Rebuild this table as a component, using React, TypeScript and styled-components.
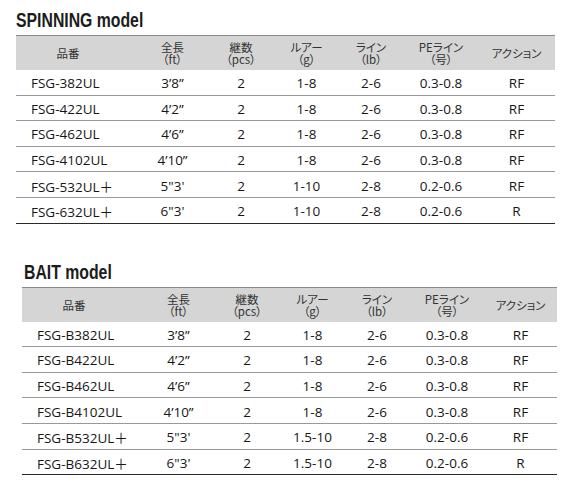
import styled, { createGlobalStyle } from 'styled-components';

const GlobalStyle = createGlobalStyle`
  html, body {
    margin: 0;
    padding: 0;
    background: #fff;
  }
`;

type Spec = {
  model: string;
  length: string;
  pcs: string;
  lure: string;
  line: string;
  pe: string;
  action: string;
};

const spinning: Spec[] = [
  { model: 'FSG-382UL', length: '3’8”', pcs: '2', lure: '1-8', line: '2-6', pe: '0.3-0.8', action: 'RF' },
  { model: 'FSG-422UL', length: '4’2”', pcs: '2', lure: '1-8', line: '2-6', pe: '0.3-0.8', action: 'RF' },
  { model: 'FSG-462UL', length: '4’6”', pcs: '2', lure: '1-8', line: '2-6', pe: '0.3-0.8', action: 'RF' },
  { model: 'FSG-4102UL', length: '4’10”', pcs: '2', lure: '1-8', line: '2-6', pe: '0.3-0.8', action: 'RF' },
  { model: 'FSG-532UL＋', length: '5"3\'', pcs: '2', lure: '1-10', line: '2-8', pe: '0.2-0.6', action: 'RF' },
  { model: 'FSG-632UL＋', length: '6"3\'', pcs: '2', lure: '1-10', line: '2-8', pe: '0.2-0.6', action: 'R' },
];

const bait: Spec[] = [
  { model: 'FSG-B382UL', length: '3’8”', pcs: '2', lure: '1-8', line: '2-6', pe: '0.3-0.8', action: 'RF' },
  { model: 'FSG-B422UL', length: '4’2”', pcs: '2', lure: '1-8', line: '2-6', pe: '0.3-0.8', action: 'RF' },
  { model: 'FSG-B462UL', length: '4’6”', pcs: '2', lure: '1-8', line: '2-6', pe: '0.3-0.8', action: 'RF' },
  { model: 'FSG-B4102UL', length: '4’10”', pcs: '2', lure: '1-8', line: '2-6', pe: '0.3-0.8', action: 'RF' },
  { model: 'FSG-B532UL＋', length: '5"3\'', pcs: '2', lure: '1.5-10', line: '2-8', pe: '0.2-0.6', action: 'RF' },
  { model: 'FSG-B632UL＋', length: '6"3\'', pcs: '2', lure: '1.5-10', line: '2-8', pe: '0.2-0.6', action: 'R' },
];

const headers = [
  ['品番'],
  ['全長', '（ft）'],
  ['継数', '（pcs）'],
  ['ルアー', '（g）'],
  ['ライン', '（lb）'],
  ['PEライン', '（号）'],
  ['アクション'],
];

type TableProps = { title: string; rows: Spec[]; left: number; width: number; titleInset: number };

const SpecTable = ({ title, rows, left, width, titleInset }: TableProps) => (
  <Section $left={left} $width={width}>
    <Title $inset={titleInset}>{title}</Title>
    <HeadRow>
      {headers.map((h, i) => (
        <HeadCell key={i} $shift={i === 1}>
          {h.map((t) => (
            <HeadLine key={t}>{t}</HeadLine>
          ))}
        </HeadCell>
      ))}
    </HeadRow>
    {rows.map((r, i) => (
      <Row key={r.model} $last={i === rows.length - 1}>
        <ModelCell>{r.model}</ModelCell>
        <Cell $shift>{r.length}</Cell>
        <Cell>{r.pcs}</Cell>
        <Cell>{r.lure}</Cell>
        <Cell>{r.line}</Cell>
        <Cell>{r.pe}</Cell>
        <Cell>{r.action}</Cell>
      </Row>
    ))}
  </Section>
);

export default function App() {
  return (
    <>
      <GlobalStyle />
      <Page>
        <SpecTable title="SPINNING model" rows={spinning} left={16} width={539} titleInset={0} />
        <SpecTable title="BAIT model" rows={bait} left={22} width={535} titleInset={2} />
      </Page>
    </>
  );
}

const Page = styled.div`
  width: 573px;
  height: 489px;
  padding-top: 10px;
  box-sizing: border-box;
  display: flex;
  flex-direction: column;
  gap: 38px;
`;

const Section = styled.section<{ $left: number; $width: number }>`
  margin-left: ${(p) => p.$left}px;
  width: ${(p) => p.$width}px;
`;

const Title = styled.h2<{ $inset: number }>`
  margin: 0 0 5px ${(p) => p.$inset}px;
  height: 20px;
  font-family: 'Liberation Sans', 'Arial', sans-serif;
  font-weight: bold;
  font-size: 20px;
  line-height: 20px;
  color: #1c1c1c;
  white-space: nowrap;
  transform: scaleX(0.79);
  transform-origin: left center;
`;

const grid = `
  display: grid;
  grid-template-columns: 104px 87px 68px 63px 66px 74px 1fr;
`;

const HeadRow = styled.div`
  ${grid}
  height: 35px;
  box-sizing: border-box;
  background: #d5d5d5;
  border-top: 1.5px solid #8a8a8a;
`;

const HeadCell = styled.div<{ $shift?: boolean }>`
  display: flex;
  flex-direction: column;
  align-items: center;
  justify-content: center;
  padding-left: ${(p) => (p.$shift ? 18 : 0)}px;
  font-family: 'Noto Sans CJK JP', 'Open Sans', sans-serif;
  font-feature-settings: 'palt';
  font-size: 11.5px;
  color: #333;
`;

const HeadLine = styled.span`
  display: block;
  height: 12px;
  line-height: 12px;
  white-space: nowrap;
`;

const Row = styled.div<{ $last?: boolean }>`
  ${grid}
  height: 25.6px;
  box-sizing: border-box;
  border-bottom: 1.5px solid ${(p) => (p.$last ? '#2a2a2a' : '#999')};
`;

const Cell = styled.div<{ $shift?: boolean }>`
  display: flex;
  align-items: center;
  justify-content: center;
  padding-top: 2px;
  padding-left: ${(p) => (p.$shift ? 18 : 0)}px;
  font-family: 'Open Sans', 'Noto Sans CJK JP', sans-serif;
  font-size: 13.5px;
  color: #161616;
  white-space: nowrap;
`;

const ModelCell = styled(Cell)`
  justify-content: flex-start;
  padding-left: 15px;
`;
